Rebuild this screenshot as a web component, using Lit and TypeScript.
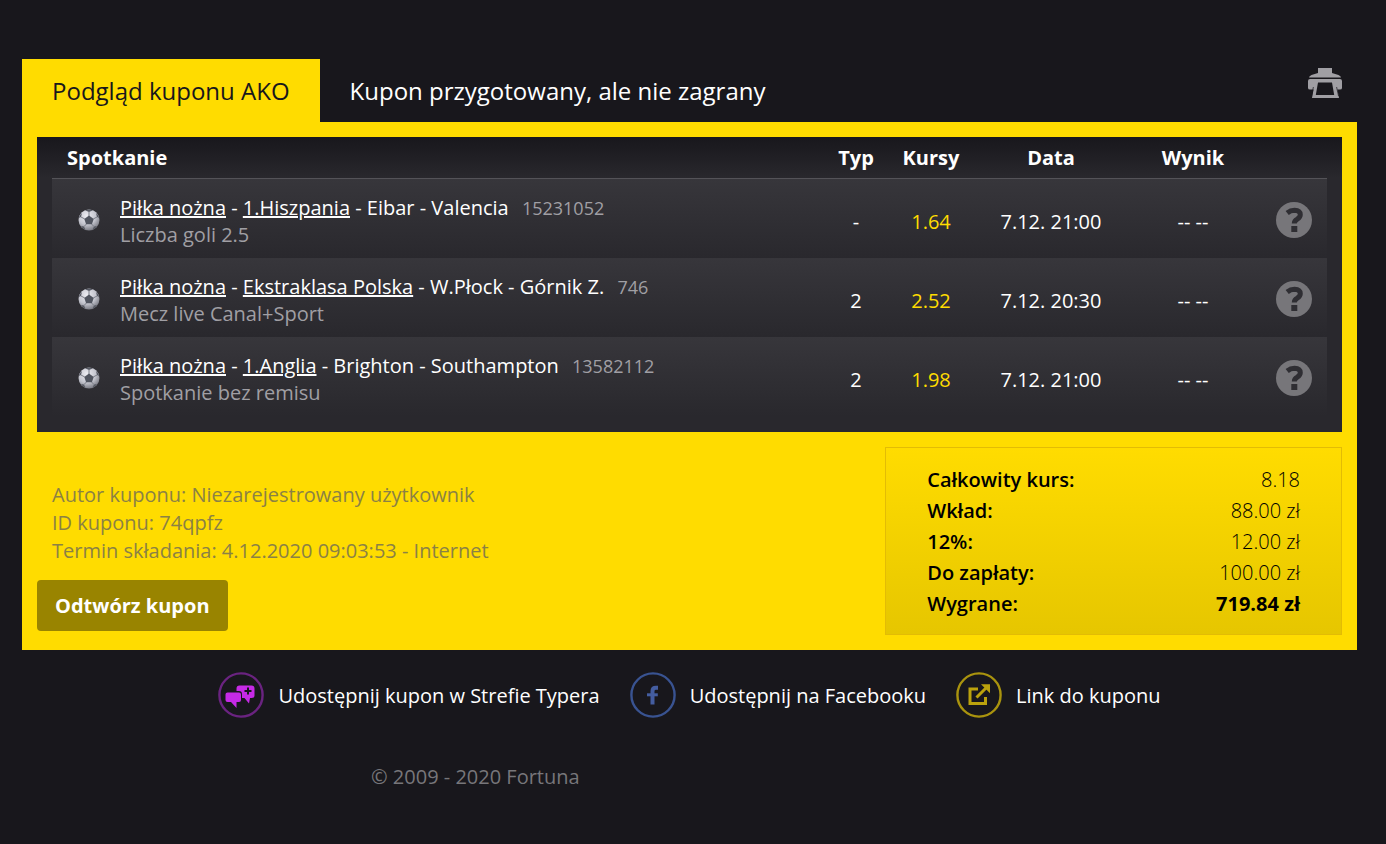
import { LitElement, html, svg, css } from "lit";
import { customElement } from "lit/decorators.js";

interface Bet {
  sport: string;
  league: string;
  match: string;
  code: string;
  note: string;
  pick: string;
  odds: string;
  date: string;
  result: string;
}

const BETS: Bet[] = [
  { sport: "Piłka nożna", league: "1.Hiszpania", match: "Eibar - Valencia", code: "15231052", note: "Liczba goli 2.5", pick: "-", odds: "1.64", date: "7.12. 21:00", result: "-- --" },
  { sport: "Piłka nożna", league: "Ekstraklasa Polska", match: "W.Płock - Górnik Z.", code: "746", note: "Mecz live Canal+Sport", pick: "2", odds: "2.52", date: "7.12. 20:30", result: "-- --" },
  { sport: "Piłka nożna", league: "1.Anglia", match: "Brighton - Southampton", code: "13582112", note: "Spotkanie bez remisu", pick: "2", odds: "1.98", date: "7.12. 21:00", result: "-- --" },
];

const TOTALS: [string, string][] = [
  ["Całkowity kurs:", "8.18"],
  ["Wkład:", "88.00 zł"],
  ["12%:", "12.00 zł"],
  ["Do zapłaty:", "100.00 zł"],
  ["Wygrane:", "719.84 zł"],
];

const printIcon = html`<svg width="34" height="30" viewBox="0 0 34 30" fill="#a09fa4" aria-hidden="true">
  <path d="M10 0h14v5l6.500 2q2.500 1 2.500 2.500H1Q1 8 3.500 7L10 5z" />
  <path fill-rule="evenodd" d="M2 11h30q2 0 2 2v7q0 1.500-2 1.500h-2.600L31 30H4l1.600-8.500H2Q0 21.500 0 20v-7q0-2 2-2zM10 14.500L7.800 27h18.400L24 14.500z" />
  <path d="M5.400 19L3.500 28M28.600 19l1.900 9" stroke="#18171c" stroke-width="0.700" />
</svg>`;

const helpIcon = html`<svg width="36" height="36" viewBox="0 0 36 36" aria-hidden="true">
  <circle cx="18" cy="18" r="18" fill="#77767a" />
  <path d="M11.200 11Q14.500 8.300 18.500 8.300Q24.300 8.500 24.300 12.800Q24.300 15.300 21.200 17.200Q18.300 18.800 18.300 21.500" fill="none" stroke="#2f2e33" stroke-width="5" />
  <rect x="15.300" y="24" width="6" height="6" fill="#2f2e33" />
</svg>`;

const ballIcon = html`<svg width="22" height="22" viewBox="0 0 22 22" aria-hidden="true">
  <defs>
    <radialGradient id="ball" cx="0.4" cy="0.3" r="0.7">
      <stop offset="0" stop-color="#ececf2" />
      <stop offset="0.600" stop-color="#c4c5ce" />
      <stop offset="1" stop-color="#7e7f88" />
    </radialGradient>
  </defs>
  <circle cx="11" cy="11" r="10.500" fill="url(#ball)" />
  <path d="M11 6.500l4.700 3.400-1.800 5.400H8.100L6.300 9.900z" fill="#50545f" />
  <path d="M7 1.300L11 3l4-1.700Q11-.2 7 1.300zM.6 9L3 8l1-4Q1.200 6 .6 9zM21.400 9L19 8l-1-4q2.800 2 3.400 5zM3 17l3 .6L7.500 21Q4.500 19.800 3 17zM19 17l-3 .6-1.500 3.400q3-1.200 4.500-4z" fill="#565963" />
  <path d="M11 7V3M6.800 10L3 8M15.200 10L19 8M8.400 15L6 17.600M13.600 15l2.400 2.600" stroke="#7b7e88" stroke-width="1" />
</svg>`;

const ring = (color: string, inner: unknown) => html`<svg width="46" height="46" viewBox="0 0 46 46" fill="none" aria-hidden="true">
  <circle cx="23" cy="23" r="21.600" stroke=${color} stroke-width="2.400" />${inner}
</svg>`;

const SHARES = [
  {
    label: "Udostępnij kupon w Strefie Typera",
    icon: ring("#6a2380", svg`
      <path d="M21.500 13.500h12q3 0 3 3v7q0 2.500-3 2.500H32l-1 5.500-4.500-5.500H24v-4q0-3-3-3h-2.500v-2.500q0-3 3-3z" fill="#c62ae6" />
      <path d="M30 15.500v7M26.500 19h7" stroke="#18171c" stroke-width="2" />
      <path d="M9.500 20.500h11.500q2 0 2 2V28q0 2-2 2h-2.500v6l-5.500-6H9.500q-2 0-2-2v-5.500q0-2 2-2z" fill="#c62ae6" />`),
  },
  {
    label: "Udostępnij na Facebooku",
    icon: ring("#395391", svg`
      <path d="M28 15.700h-2q-3.500 0-3.500 3.300V32.500" stroke="#445da0" stroke-width="4" />
      <path d="M17 22.800h10.800" stroke="#445da0" stroke-width="3" />`),
  },
  {
    label: "Link do kuponu",
    icon: ring("#a9930e", svg`
      <path d="M22 17h-8v14.500h15.500V25" stroke="#bba20d" stroke-width="3" />
      <path d="M20.500 25.500L31 15" stroke="#bba20d" stroke-width="3" />
      <path d="M25 12.300H34V21.300z" fill="#bba20d" />`),
  },
];

@customElement("app-root")
export class AppRoot extends LitElement {
  static styles = css`
    :host {
      display: block;
      box-sizing: border-box;
      min-height: 100vh;
      padding: 59px 29px 52px 22px;
      background: #18171c;
      color: #fff;
      font: 400 20px/27px "Open Sans", sans-serif;
    }
    a { color: inherit; }
    svg { display: block; }
    .top { display: flex; align-items: stretch; font-size: 24px; line-height: 33px; }
    .tab { padding: 15px 30px; white-space: nowrap; }
    .tab.active { background: #ffdc00; color: #18171c; }
    h1, h2 { margin: 0; font-size: inherit; font-weight: 400; }
    button { display: block; border: 0; font: inherit; cursor: pointer; }
    .print { align-self: flex-start; margin: 9px 15px 0 auto; padding: 0; background: none; }
    .body { padding: 15px; background: #ffdc00; }
    .panel {
      padding: 0 15px 16px;
      background: linear-gradient(#18171c, #29282d 41px);
    }
    .bets { width: 100%; table-layout: fixed; border-collapse: collapse; }
    .bets th { height: 41px; padding: 0; font-weight: 700; vertical-align: middle; }
    .bets thead { border-bottom: 1px solid #545358; }
    .bets th.event { padding-left: 15px; text-align: left; }
    .bets td { padding: 15px 0 10px; text-align: center; vertical-align: middle; }
    .bets tbody tr { background: linear-gradient(#37363b, #29282d); }
    .c-icon { width: 68px; }
    .c-pick { width: 76px; }
    .c-odds { width: 74px; }
    .c-date { width: 166px; }
    .c-result { width: 118px; }
    .c-help { width: 75px; }
    .bets td.ball { padding: 15px 0 12px 26px; }
    .bets td.info { text-align: left; }
    .bets td.odds { color: #ffdc00; }
    .bets td.help { padding: 15px 15px 12px 24px; }
    .help button { padding: 0; background: none; }
    .code { margin-left: 8px; color: #a09fa4; font-size: 18px; line-height: 18px; }
    .note { color: #a09fa4; }
    .summary { display: flex; align-items: flex-start; justify-content: space-between; padding-top: 15px; }
    .meta { margin: 34px 0 15px 15px; color: #8b8145; line-height: 28px; }
    .meta p { margin: 0; }
    .replay {
      padding: 12px 18px;
      border-radius: 4px;
      background: #998400;
      color: #fff;
      font-weight: 700;
    }
    .totals {
      box-sizing: border-box;
      width: 35%;
      margin: 0;
      padding: 16px 41px 15px;
      border: 1px solid #e3bc05;
      background: linear-gradient(#ffdc00, #e6c600);
      color: #000;
      line-height: 31px;
    }
    .line { display: flex; justify-content: space-between; }
    .line dt { font-weight: 600; }
    .line dd { margin: 0; font-weight: 300; }
    .line:last-child dd { font-weight: 700; }
    .shares { display: flex; justify-content: center; gap: 30px; padding-top: 22px; }
    .shares a { display: flex; align-items: center; gap: 14px; text-decoration: none; white-space: nowrap; }
    .copy { margin: 45px 0 0 349px; color: #77767a; }
  `;

  private row(b: Bet) {
    return html`<tr>
      <td class="ball">${ballIcon}</td>
      <td class="info">
        <div><a href="#">${b.sport}</a> - <a href="#">${b.league}</a> - ${b.match} <span class="code">${b.code}</span></div>
        <div class="note">${b.note}</div>
      </td>
      <td>${b.pick}</td>
      <td class="odds">${b.odds}</td>
      <td>${b.date}</td>
      <td>${b.result}</td>
      <td class="help"><button type="button" aria-label="Pomoc">${helpIcon}</button></td>
    </tr>`;
  }

  render() {
    return html`
      <header class="top">
        <h1 class="tab active">Podgląd kuponu AKO</h1>
        <h2 class="tab">Kupon przygotowany, ale nie zagrany</h2>
        <button class="print" type="button" aria-label="Drukuj">${printIcon}</button>
      </header>
      <main class="body">
        <div class="panel">
          <table class="bets">
            <colgroup>
              <col class="c-icon" /><col /><col class="c-pick" /><col class="c-odds" />
              <col class="c-date" /><col class="c-result" /><col class="c-help" />
            </colgroup>
            <thead>
              <tr><th class="event" colspan="2">Spotkanie</th><th>Typ</th><th>Kursy</th><th>Data</th><th>Wynik</th><th></th></tr>
            </thead>
            <tbody>${BETS.map((b) => this.row(b))}</tbody>
          </table>
        </div>
        <div class="summary">
          <div>
            <div class="meta">
              <p>Autor kuponu: Niezarejestrowany użytkownik</p>
              <p>ID kuponu: 74qpfz</p>
              <p>Termin składania: 4.12.2020 09:03:53 - Internet</p>
            </div>
            <button class="replay" type="button">Odtwórz kupon</button>
          </div>
          <dl class="totals">
            ${TOTALS.map(([k, v]) => html`<div class="line"><dt>${k}</dt><dd>${v}</dd></div>`)}
          </dl>
        </div>
      </main>
      <nav class="shares">
        ${SHARES.map((s) => html`<a href="#">${s.icon}<span>${s.label}</span></a>`)}
      </nav>
      <footer><p class="copy">© 2009 - 2020 Fortuna</p></footer>
    `;
  }
}
